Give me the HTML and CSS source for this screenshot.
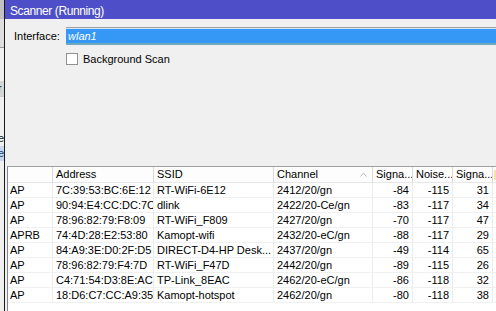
FILE: index.html
```html
<!DOCTYPE html>
<html lang="en">
<head>
  <meta charset="UTF-8">
  <title>Scanner (Running)</title>
  <link rel="stylesheet" href="styles.css">
</head>
<body>
  <div class="desk">
    <!-- window behind, cut at the left edge -->
    <div class="behind">
      <div class="bh-title"></div>
      <div class="bh-panel"></div>
      <div class="bh-gap"></div>
      <div class="bh-item bh-grey">r</div>
      <div class="bh-gap2"></div>
      <div class="bh-item">e</div>
      <div class="bh-item bh-sel">e</div>
    </div>

    <div class="window">
      <div class="titlebar">Scanner (Running)</div>

      <div class="form">
        <div class="field">
          <span class="label">Interface:</span>
          <div class="input">wlan1</div>
        </div>
        <div class="check">
          <span class="box"></span>
          <span>Background Scan</span>
        </div>
      </div>

      <div class="list">
        <div class="row head">
          <div class="cell"></div>
          <div class="cell">Address</div>
          <div class="cell">SSID</div>
          <div class="cell sort">Channel
            <svg width="7" height="5" viewBox="0 0 7 5"><path d="M0.5 4.5 L3.5 1 L6.5 4.5" fill="none" stroke="#b8b8b8" stroke-width="1"/></svg>
          </div>
          <div class="cell">Signa...</div>
          <div class="cell">Noise...</div>
          <div class="cell">Signa...</div>
          <div class="cell extra"><span class="mark"></span></div>
        </div>
        <div id="rows"></div>
      </div>
    </div>
  </div>

  <script>
    // scan results
    const scans = [
      ['AP', '7C:39:53:BC:6E:12', 'RT-WiFi-6E12', '2412/20/gn', -84, -115, 31],
      ['AP', '90:94:E4:CC:DC:7C', 'dlink', '2422/20-Ce/gn', -83, -117, 34],
      ['AP', '78:96:82:79:F8:09', 'RT-WiFi_F809', '2427/20/gn', -70, -117, 47],
      ['APRB', '74:4D:28:E2:53:80', 'Kamopt-wifi', '2432/20-eC/gn', -88, -117, 29],
      ['AP', '84:A9:3E:D0:2F:D5', 'DIRECT-D4-HP Desk...', '2437/20/gn', -49, -114, 65],
      ['AP', '78:96:82:79:F4:7D', 'RT-WiFi_F47D', '2442/20/gn', -89, -115, 26],
      ['AP', 'C4:71:54:D3:8E:AC', 'TP-Link_8EAC', '2462/20-eC/gn', -86, -118, 32],
      ['AP', '18:D6:C7:CC:A9:35', 'Kamopt-hotspot', '2462/20/gn', -80, -118, 38]
    ];
    const rows = document.getElementById('rows');
    scans.forEach(function(s) {
      const row = document.createElement('div');
      row.className = 'row';
      row.innerHTML = `<div class="cell">${s[0]}</div>
        <div class="cell">${s[1]}</div>
        <div class="cell">${s[2]}</div>
        <div class="cell">${s[3]}</div>
        <div class="cell num">${s[4]}</div>
        <div class="cell num">${s[5]}</div>
        <div class="cell num">${s[6]}</div>
        <div class="cell"></div>`;
      rows.appendChild(row);
    });
  </script>
</body>
</html>
```

FILE: styles.css
```css
body {
  margin: 0;
  font-family: 'Liberation Sans', Tahoma, Arial, sans-serif;
  font-size: 11px;
  color: #000;
  background: #f0f0f0;
  overflow: hidden;
}
.desk {
  display: flex;
  height: 311px;
  width: 496px;
}

/* the window behind */
.behind {
  width: 4px;
  border-right: 1px solid #1a1a1a;
  background: #f0f0f0;
  display: flex;
  flex-direction: column;
  overflow: hidden;
  color: #222;
  line-height: 14px;
}
.bh-title { height: 19px; background: #c2c2c2; }
.bh-panel { height: 28px; background: #dedede; border-bottom: 1px solid #9a9a9a; }
.bh-gap { height: 33px; }
.bh-item { height: 15px; white-space: nowrap; margin-left: -2px; }
.bh-grey { background: #d6d6d6; }
.bh-gap2 { height: 34px; border-top: 1px solid #cfcfcf; }
.bh-sel { background: #c9d8ec; color: #1c3f7a; }

/* scanner window */
.window {
  flex: 1;
  min-width: 0;
  display: flex;
  flex-direction: column;
  background: #f0f0f0;
}
.titlebar {
  height: 16px;
  padding: 3px 0 0 5px;
  line-height: 16px;
  background: #4e4fc8;
  color: #fff;
  font-size: 12px;
  letter-spacing: -0.4px;
  white-space: nowrap;
}
.form {
  padding: 8px 0 0 9px;
}
.field {
  display: flex;
  align-items: center;
  height: 18px;
}
.label {
  width: 52px;
}
.input {
  flex: 1;
  height: 14px;
  line-height: 14px;
  border-top: 1px solid #a2a2a2;
  border-bottom: 2px solid #6fa9bf;
  box-shadow: inset 0 1px 0 #d6e6f7;
  padding: 1px 0 0 2px;
  background: #3597f6;
  color: #fff;
  font-style: italic;
}
.check {
  display: flex;
  align-items: center;
  gap: 5px;
  margin: 8px 0 0 52px;
  height: 12px;
}
.box {
  width: 10px;
  height: 10px;
  border: 1px solid #8f8f8f;
  background: #fff;
}

/* list view */
.list {
  margin: auto 0 0 2px;
  height: 144px;
  background: #fff;
  border-left: 1px solid #828790;
  border-top: 1px solid #a0a0a0;
  overflow: hidden;
}
.row {
  display: grid;
  grid-template-columns: 45px 101px 120px 99px 40px 40px 40px 60px;
  height: 15px;
}
.cell {
  box-sizing: border-box;
  padding: 0 2px 0 2px;
  border-right: 1px solid #ececec;
  border-bottom: 1px solid #f0f0f0;
  line-height: 14px;
  white-space: nowrap;
  overflow: hidden;
}
.row .cell:nth-child(n+2) { padding-left: 3px; }
.num {
  text-align: right;
  padding-right: 3px;
}
.head {
  height: 16px;
}
.head .cell {
  line-height: 15px;
  border-right: 1px solid #dadada;
  border-bottom: 1px solid #e6e6e6;
  background: #fdfdfd;
}
.sort {
  display: flex;
  align-items: center;
  justify-content: space-between;
  padding-right: 5px;
}
.extra {
  display: flex;
  align-items: center;
}
.mark {
  width: 3px;
  height: 10px;
  margin-left: -2px;
  background: #f3e3a8;
}
```
